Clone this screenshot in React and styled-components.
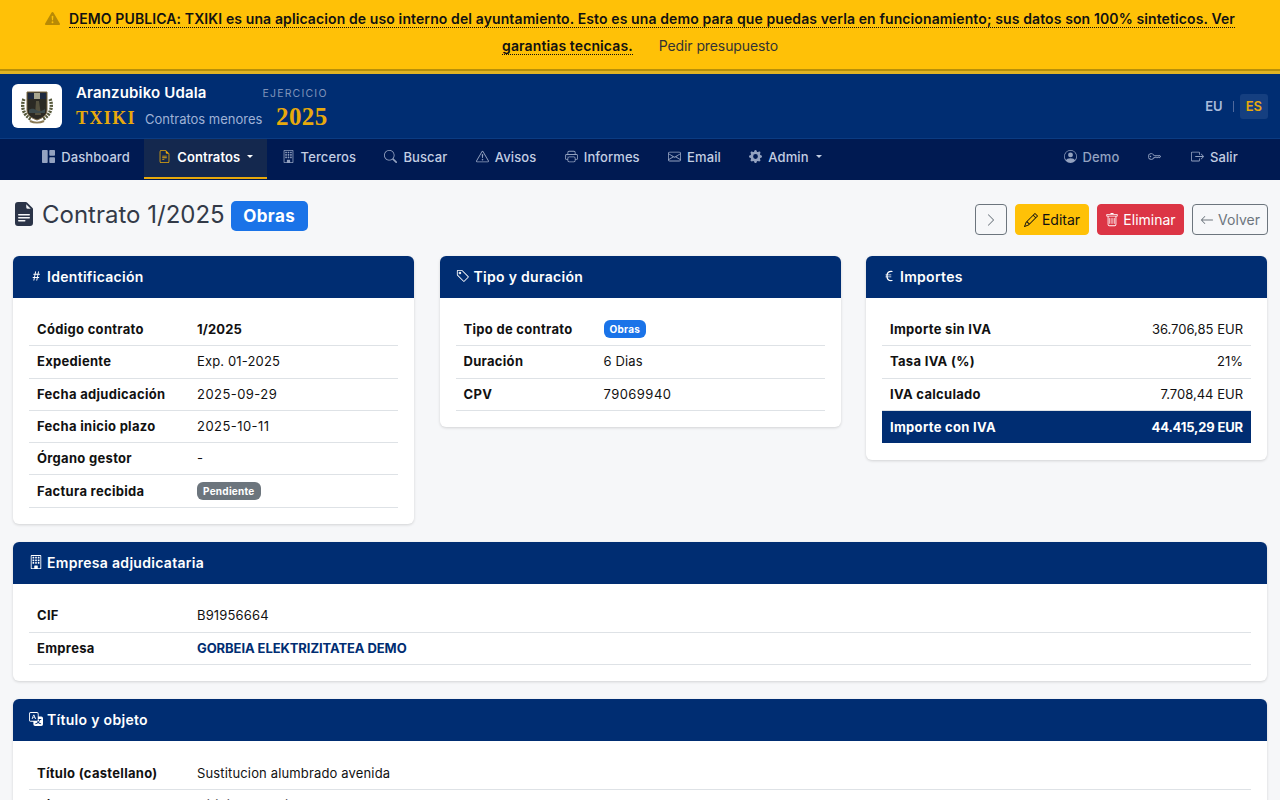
import React from 'react'
import styled, { createGlobalStyle } from 'styled-components';
import {
  BsExclamationTriangleFill, BsGrid1X2Fill, BsFileEarmarkText, BsBuilding, BsSearch,
  BsExclamationTriangle, BsPrinter, BsEnvelope, BsGearFill, BsPersonCircle, BsKey,
  BsBoxArrowRight, BsChevronRight, BsPencil, BsTrash, BsArrowLeft, BsHash, BsTag,
  BsCurrencyEuro, BsTranslate, BsFileEarmarkTextFill,
} from 'react-icons/bs';

const navy = '#002d72';

const Global = createGlobalStyle`
  html, body { margin: 0; padding: 0; height: 100%; overflow: hidden; }
  body { font-family: Inter, "Liberation Sans", sans-serif; background: #f6f7f9; color: #111; }
  * { box-sizing: border-box; }
`;

const Crest = () => (
  <svg width="36" height="36" viewBox="0 0 36 36">
    <path d="M5 11c-3 7-1 16 7 20M31 11c3 7 1 16-7 20" fill="none" stroke="#55583a" strokeWidth="3.4" strokeDasharray="2 1" />
    <path d="M8 4h20v18c0 6-5 8-10 10-5-2-10-4-10-10z" fill="#2b2a24" stroke="#7a6845" strokeWidth="1" />
    <rect x="9" y="5" width="6" height="6" fill="#1f2a40" />
    <rect x="15" y="5" width="6" height="6" fill="#a9a68e" />
    <rect x="21" y="5" width="6" height="6" fill="#1f2a40" />
    <path d="M16 27l1-14h3l2 14z" fill="#56523f" />
    <path d="M10 22c3-2 5-1 7 0s5 2 9-1v4H10z" fill="#3c4a4c" />
    <path d="M11 33c4 2 10 2 14 0" fill="none" stroke="#8a7a55" strokeWidth="2" />
  </svg>
);

const navItems = [
  { icon: <BsGrid1X2Fill />, label: 'Dashboard' },
  { icon: <BsFileEarmarkText />, label: 'Contratos', active: true, caret: true },
  { icon: <BsBuilding />, label: 'Terceros' },
  { icon: <BsSearch />, label: 'Buscar' },
  { icon: <BsExclamationTriangle />, label: 'Avisos' },
  { icon: <BsPrinter />, label: 'Informes' },
  { icon: <BsEnvelope />, label: 'Email' },
  { icon: <BsGearFill />, label: 'Admin', caret: true },
];

const App = () => {
  return (
    <Page>
      <Global />
      <Banner>
        <BannerLine>
          <BannerIcon><BsExclamationTriangleFill /></BannerIcon>
          <BannerLink>DEMO PUBLICA: TXIKI es una aplicacion de uso interno del ayuntamiento. Esto es una demo para que puedas verla en funcionamiento; sus datos son 100% sinteticos. Ver</BannerLink>
        </BannerLine>
        <BannerLine>
          <BannerLink>garantias tecnicas.</BannerLink>
          <BannerQuote>Pedir presupuesto</BannerQuote>
        </BannerLine>
      </Banner>
      <Header>
        <LogoBox><Crest /></LogoBox>
        <Brand>
          <Town>Aranzubiko Udala</Town>
          <BrandLine><Txiki>TXIKI</Txiki><Sub>Contratos menores</Sub></BrandLine>
        </Brand>
        <Year>
          <YearLabel>EJERCICIO</YearLabel>
          <YearValue>2025</YearValue>
        </Year>
        <Langs>
          <Lang>EU</Lang>
          <LangSep />
          <Lang $active>ES</Lang>
        </Langs>
      </Header>
      <Nav>
        {navItems.map((item) => (
          <NavItem key={item.label} $active={item.active}>
            <NavIcon $active={item.active}>{item.icon}</NavIcon>
            {item.label}
            {item.caret && <Caret />}
          </NavItem>
        ))}
        <NavSpacer />
        <NavItem $muted><NavIcon><BsPersonCircle /></NavIcon>Demo</NavItem>
        <KeyItem $muted><NavIcon><BsKey /></NavIcon></KeyItem>
        <NavItem><NavIcon><BsBoxArrowRight /></NavIcon>Salir</NavItem>
      </Nav>
      <Main>
        <TitleRow>
          <Title>
            <TitleIcon><BsFileEarmarkTextFill /></TitleIcon>
            Contrato 1/2025
            <TitleBadge>Obras</TitleBadge>
          </Title>
          <Actions>
            <Btn $kind="ghost" $w={32}><BsChevronRight /></Btn>
            <Btn $kind="warning" $w={74}><BsPencil />Editar</Btn>
            <Btn $kind="danger" $w={87}><BsTrash />Eliminar</Btn>
            <Btn $kind="ghost" $w={76}><BsArrowLeft />Volver</Btn>
          </Actions>
        </TitleRow>
        <Columns>
          <Card>
            <CardHead><BsHash />Identificación</CardHead>
            <CardBody>
              <Table>
                <Row><Label>Código contrato</Label><Value $bold>1/2025</Value></Row>
                <Row><Label>Expediente</Label><Value>Exp. 01-2025</Value></Row>
                <Row><Label>Fecha adjudicación</Label><Value $date>2025-09-29</Value></Row>
                <Row><Label>Fecha inicio plazo</Label><Value $date>2025-10-11</Value></Row>
                <Row><Label>Órgano gestor</Label><Value>-</Value></Row>
                <Row><Label>Factura recibida</Label><Value><Pill $color="#6c757d">Pendiente</Pill></Value></Row>
              </Table>
            </CardBody>
          </Card>
          <Card>
            <CardHead><BsTag />Tipo y duración</CardHead>
            <CardBody>
              <Table>
                <Row><Label $w={140}>Tipo de contrato</Label><Value><Pill $color="#1a73e8">Obras</Pill></Value></Row>
                <Row><Label $w={140}>Duración</Label><Value>6 Dias</Value></Row>
                <Row><Label $w={140}>CPV</Label><Value $date>79069940</Value></Row>
              </Table>
            </CardBody>
          </Card>
          <Card>
            <CardHead><BsCurrencyEuro />Importes</CardHead>
            <CardBody>
              <Table>
                <Row><Label>Importe sin IVA</Label><Amount>36.706,85 EUR</Amount></Row>
                <Row><Label>Tasa IVA (%)</Label><Amount>21%</Amount></Row>
                <Row><Label>IVA calculado</Label><Amount>7.708,44 EUR</Amount></Row>
                <TotalRow><Label>Importe con IVA</Label><Amount $tight>44.415,29 EUR</Amount></TotalRow>
              </Table>
            </CardBody>
          </Card>
        </Columns>
        <Card>
          <CardHead><BsBuilding />Empresa adjudicataria</CardHead>
          <CardBody>
            <Table>
              <Row><Label>CIF</Label><Value>B91956664</Value></Row>
              <Row><Label>Empresa</Label><Value $link>GORBEIA ELEKTRIZITATEA DEMO</Value></Row>
            </Table>
          </CardBody>
        </Card>
        <Card>
          <CardHead><BsTranslate />Título y objeto</CardHead>
          <CardBody>
            <Table>
              <Row><Label>Título (castellano)</Label><Value>Sustitucion alumbrado avenida</Value></Row>
              <Row><Label>Título (euskera)</Label><Value>Hiribideko argiztapena</Value></Row>
            </Table>
          </CardBody>
        </Card>
      </Main>
    </Page>
  )
}

export default App

const Page = styled.div`height: 800px; overflow: hidden;`;

const Banner = styled.div`
  height: 74px;
  background: #ffc107;
  border-bottom: 3px solid #e0b324;
  box-shadow: inset 0 -2px 0 #b8900a;
  padding: 5px 16px 0;
`;
const BannerLine = styled.div`
  display: flex; justify-content: center; align-items: center; height: 27px;
  font-size: 14px; font-weight: 600; letter-spacing: 0.11px; color: #111; white-space: nowrap;
`;
const BannerIcon = styled.span`display: flex; color: #b88a05; font-size: 15px; margin-right: 9px;`;
const BannerLink = styled.span`border-bottom: 1px dotted #111; line-height: 17px;`;
const BannerQuote = styled.span`margin-left: 26px; font-weight: 400; color: #333; letter-spacing: -0.1px;`;

const Header = styled.header`
  height: 65px;
  background: ${navy};
  border-bottom: 1px solid #0b3b82;
  display: flex;
  align-items: center;
  padding: 0 12px;
`;
const LogoBox = styled.div`
  width: 50px; height: 44px; background: #fff; border-radius: 6px;
  display: flex; align-items: center; justify-content: center;
`;
const Brand = styled.div`margin-left: 14px; padding-bottom: 1px;`;
const Town = styled.div`color: #fff; font-size: 15px; font-weight: 600; letter-spacing: 0.15px; line-height: 20px;`;
const BrandLine = styled.div`display: flex; align-items: baseline; gap: 9px; margin-top: 4px;`;
const Txiki = styled.span`
  font-family: "Liberation Serif", serif; font-weight: 700; font-size: 18px;
  letter-spacing: 1.4px; color: #e8a90c; line-height: 22px;
`;
const Sub = styled.span`color: #9fb2d6; font-size: 13px;`;
const Year = styled.div`display: flex; flex-direction: column; align-items: flex-end; padding-top: 5px;`;
const YearLabel = styled.span`font-size: 10.5px; letter-spacing: 1.2px; color: #7f93b9; line-height: 14px;`;
const YearValue = styled.span`
  font-family: "Liberation Serif", serif; font-weight: 700; font-size: 25px; color: #e8a90c;
  line-height: 26px; margin-top: 3px; letter-spacing: 0.4px;
`;
const Langs = styled.div`margin-left: auto; display: flex; align-items: center; gap: 6px;`;
const Lang = styled.span`
  font-size: 13px; font-weight: 600; padding: 0 6px; height: 25px; line-height: 25px; border-radius: 3px;
  color: ${({ $active }) => ($active ? '#e8a90c' : '#a9bcdc')};
  background: ${({ $active }) => ($active ? '#153f80' : 'transparent')};
`;
const LangSep = styled.span`width: 1px; height: 11px; background: #50699c; margin-left: -2px;`;

const Nav = styled.nav`
  height: 41px;
  background: #001a52;
  display: flex;
  align-items: flex-start;
  padding: 0 28px;
`;
const NavItem = styled.div`
  display: flex; align-items: center; gap: 6px;
  height: 40px;
  padding: 0 14.2px 3px;
  font-size: 13px; letter-spacing: 0.1px;
  font-weight: ${({ $active }) => ($active ? 600 : 500)};
  color: ${({ $active, $muted }) => ($active ? '#fff' : $muted ? '#93a2c0' : '#c3cee2')};
  background: ${({ $active }) => ($active ? '#14284e' : 'transparent')};
  border-bottom: 2px solid ${({ $active }) => ($active ? '#e8a90c' : 'transparent')};
`;
const KeyItem = styled(NavItem)`padding-right: 16px;`;
const NavIcon = styled.span`
  display: flex; font-size: 13px;
  color: ${({ $active }) => ($active ? '#e8a90c' : '#93a2c0')};
`;
const Caret = styled.span`
  width: 0; height: 0; margin-left: 1px;
  border-left: 3.5px solid transparent; border-right: 3.5px solid transparent; border-top: 3.5px solid currentColor;
`;
const NavSpacer = styled.div`flex: 1;`;

const Main = styled.main`padding: 20px 13px 0; display: flex; flex-direction: column; gap: 18px;`;
const TitleRow = styled.div`display: flex; justify-content: space-between; align-items: flex-start; height: 38px;`;
const Title = styled.h1`
  margin: 0; display: flex; align-items: center; height: 28px;
  font-size: 24px; font-weight: 400; color: #333a48; white-space: nowrap;
`;
const TitleIcon = styled.span`display: flex; font-size: 24px; color: #2b3448; margin: 0 6px 0 -1px;`;
const TitleBadge = styled.span`
  background: #1a73e8; color: #fff; font-size: 17px; font-weight: 700; letter-spacing: 0.4px; border-radius: 5px;
  height: 30px; width: 77px; line-height: 30px; text-align: center; margin: 4px 0 0 6px;
`;
const kinds = {
  ghost: 'background: transparent; border: 1px solid #6c757d; color: #6c757d;',
  warning: 'background: #ffc107; border: 1px solid #ffc107; color: #111;',
  danger: 'background: #dc3545; border: 1px solid #dc3545; color: #fff;',
};
const Actions = styled.div`display: flex; gap: 8px; margin: 4px -1px 0 0;`;
const Btn = styled.button`
  ${({ $kind }) => kinds[$kind]}
  width: ${({ $w }) => $w}px;
  display: flex; align-items: center; justify-content: center; gap: 4px; height: 31px; padding: 0; border-radius: 4px;
  font-family: inherit; font-size: 14px;
`;

const Columns = styled.div`display: grid; grid-template-columns: repeat(3, 401px); justify-content: space-between; align-items: start;`;
const Card = styled.section`
  background: #fff; border-radius: 6px; overflow: hidden;
  box-shadow: 0 1px 3px rgba(0, 0, 0, 0.15);
`;
const CardHead = styled.div`
  height: 42px; background: ${navy}; color: #fff; padding: 0 16px 2px;
  display: flex; align-items: center; gap: 4px;
  font-size: 14px; font-weight: 600; letter-spacing: 0.3px;
  svg { font-size: 14px; }
`;
const CardBody = styled.div`padding: 16px 16px 16.5px;`;
const Table = styled.div`display: flex; flex-direction: column;`;
const Row = styled.div`
  height: 32.3px; display: flex; align-items: center; padding: 0 8px 1px;
  border-bottom: 1px solid #dee2e6; font-size: 13px;
`;
const TotalRow = styled(Row)`background: ${navy}; color: #fff; border-bottom: none; font-weight: 700;`;
const Label = styled.div`width: ${({ $w }) => $w || 160}px; font-weight: 700; flex: none; letter-spacing: 0.3px;`;
const Value = styled.div`
  font-weight: ${({ $bold, $link }) => ($bold || $link ? 700 : 400)};
  color: ${({ $link }) => ($link ? navy : 'inherit')};
  letter-spacing: ${({ $link, $date }) => ($link ? '-0.08px' : $date ? '0.45px' : '0.15px')};
`;
const Amount = styled.div`margin-left: auto; letter-spacing: ${({ $tight }) => ($tight ? '-0.15px' : '0')};`;
const Pill = styled.span`
  display: inline-block; background: ${({ $color }) => $color}; color: #fff;
  font-size: 10px; font-weight: 700; letter-spacing: 0.25px; padding: 0 6px; height: 18px; line-height: 18px; border-radius: 6px;
`;
